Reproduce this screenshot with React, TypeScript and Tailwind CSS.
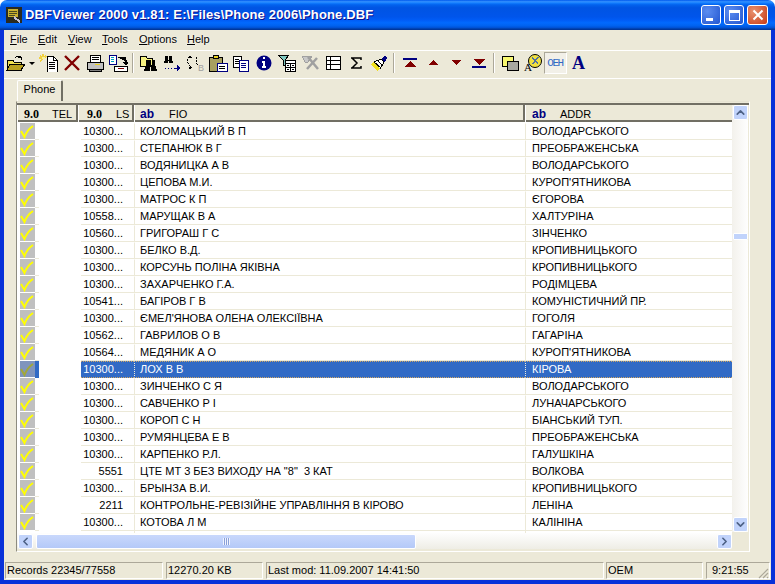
import React from 'react';
import { ChevronUp, ChevronDown, ChevronLeft, ChevronRight } from 'lucide-react';

type Row = { ls: string; fio: string; addr: string; selected?: boolean };

const rows: Row[] = [
  { ls: '10300...', fio: 'КОЛОМАЦЬКИЙ В П', addr: 'ВОЛОДАРСЬКОГО' },
  { ls: '10300...', fio: 'СТЕПАНЮК В Г', addr: 'ПРЕОБРАЖЕНСЬКА' },
  { ls: '10300...', fio: 'ВОДЯНИЦКА А В', addr: 'ВОЛОДАРСЬКОГО' },
  { ls: '10300...', fio: 'ЦЕПОВА М.И.', addr: "КУРОП'ЯТНИКОВА" },
  { ls: '10300...', fio: 'МАТРОС К П', addr: 'ЄГОРОВА' },
  { ls: '10558...', fio: 'МАРУЩАК В А', addr: 'ХАЛТУРІНА' },
  { ls: '10560...', fio: 'ГРИГОРАШ Г С', addr: 'ЗІНЧЕНКО' },
  { ls: '10300...', fio: 'БЕЛКО В.Д.', addr: 'КРОПИВНИЦЬКОГО' },
  { ls: '10300...', fio: 'КОРСУНЬ ПОЛІНА ЯКІВНА', addr: 'КРОПИВНИЦЬКОГО' },
  { ls: '10300...', fio: 'ЗАХАРЧЕНКО Г.А.', addr: 'РОДІМЦЕВА' },
  { ls: '10541...', fio: 'БАГІРОВ Г В', addr: 'КОМУНІСТИЧНИЙ ПР.' },
  { ls: '10300...', fio: "ЄМЕЛ'ЯНОВА ОЛЕНА ОЛЕКСІЇВНА", addr: 'ГОГОЛЯ' },
  { ls: '10562...', fio: 'ГАВРИЛОВ О В', addr: 'ГАГАРІНА' },
  { ls: '10564...', fio: 'МЕДЯНИК А О', addr: "КУРОП'ЯТНИКОВА" },
  { ls: '10300...', fio: 'ЛОХ В В', addr: 'КІРОВА', selected: true },
  { ls: '10300...', fio: 'ЗИНЧЕНКО С Я', addr: 'ВОЛОДАРСЬКОГО' },
  { ls: '10300...', fio: 'САВЧЕНКО Р І', addr: 'ЛУНАЧАРСЬКОГО' },
  { ls: '10300...', fio: 'КОРОП С Н', addr: 'БІАНСЬКИЙ ТУП.' },
  { ls: '10300...', fio: 'РУМЯНЦЕВА Е В', addr: 'ПРЕОБРАЖЕНСЬКА' },
  { ls: '10300...', fio: 'КАРПЕНКО Р.Л.', addr: 'ГАЛУШКІНА' },
  { ls: '5551', fio: 'ЦТЕ МТ 3 БЕЗ ВИХОДУ НА "8"  3 КАТ', addr: 'ВОЛКОВА' },
  { ls: '10300...', fio: 'БРЫНЗА В.И.', addr: 'КРОПИВНИЦЬКОГО' },
  { ls: '2211', fio: 'КОНТРОЛЬНЕ-РЕВІЗІЙНЕ УПРАВЛІННЯ В КІРОВО', addr: 'ЛЕНІНА' },
  { ls: '10300...', fio: 'КОТОВА Л М', addr: 'КАЛІНІНА' },
];

const menus = [
  { label: 'File', w: 'w-[28px]' },
  { label: 'Edit', w: 'w-[30px]' },
  { label: 'View', w: 'w-[34px]' },
  { label: 'Tools', w: 'w-[37px]' },
  { label: 'Options', w: 'w-[48px]' },
  { label: 'Help', w: 'w-[30px]' },
];

const Ico: React.FC<{ children: React.ReactNode; w?: number; h?: number }> = ({ children, w = 20, h = 18 }) => (
  <svg width={w} height={h} viewBox={`0 0 ${w} ${h}`} shapeRendering="crispEdges" fill="none">
    {children}
  </svg>
);

const OpenIcon = () => (
  <Ico>
    <path d="M1 6h6l1 2h7v8H1z" fill="#f0e050" stroke="#000" />
    <path d="M1 16l3-6h15l-4 6z" fill="#b8a020" stroke="#000" />
    <path d="M9 4q3-3 6-1M15 3v3M15 3h-3" stroke="#000" />
  </Ico>
);
const NewIcon = () => (
  <Ico>
    <path d="M8 2h6l4 4v12H8z" fill="#fff" stroke="#000" />
    <path d="M14 2v4h4M10 8h6M10 10h6M10 12h6M10 14h6" stroke="#000" />
    <path d="M1 2l3 2M4 0v3M1 7l3-2M7 2L5 4M0 4h3" stroke="#f0d040" strokeWidth="1.5" />
    <path d="M3 3h3v2H3z" fill="#f8f0a0" />
  </Ico>
);
const DeleteIcon = () => (
  <Ico>
    <path d="M3 2l14 14M17 2L3 16" stroke="#800000" strokeWidth="2.4" shapeRendering="auto" />
  </Ico>
);
const PrintIcon = () => (
  <Ico>
    <path d="M6 1h9l1 7H5z" fill="#fff" stroke="#000" />
    <path d="M2 8h16v7H2z" fill="#c0c0c0" stroke="#000" />
    <path d="M4 15h12v2H4z" fill="#808080" stroke="#000" />
    <path d="M10 10h5v1h-5z" fill="#e8d020" />
    <path d="M7 3h7M7 5h7" stroke="#000" />
  </Ico>
);
const ExportIcon = () => (
  <Ico>
    <path d="M1 1h7v9H1z" fill="#fff" stroke="#000080" />
    <path d="M3 3h3v1H3zM3 5h3v1H3zM3 7h3v1H3z" fill="#00a0c0" />
    <path d="M6 12h13v5H6z" fill="#fff" stroke="#000" />
    <path d="M10 14h6" stroke="#800000" />
    <path d="M10 3h5q3 0 3 3v2M15 8h6l-3 3z" stroke="#000" fill="#000" />
  </Ico>
);
const FindIcon = () => (
  <Ico>
    <path d="M1 2h6l1 2h5v8H1z" fill="#f4f080" stroke="#000" />
    <path d="M9 6h3v5h1V6h3v4l2 7h-6v-4h-1v4H5l2-7V6z" fill="#000" />
  </Ico>
);
const FindNextIcon = () => (
  <Ico>
    <path d="M3 2h3v4h1V2h3v3l1 4H7V7H6v2H2l1-4z" fill="#000" />
    <path d="M3 14h1M6 14h1M9 14h1M12 14h5" stroke="#000080" />
    <path d="M15 11l4 3-4 3z" fill="#000080" />
  </Ico>
);
const ReplaceIcon = () => (
  <Ico>
    <path d="M3 5q-1 5 3 8M12 3q-2 5 1 9" stroke="#000" strokeDasharray="2 1" />
    <path d="M5 1l2 3H3zM7 14l-3 1 1-3z" fill="#000" />
    <text x="13" y="17" fontSize="9" fontFamily="Liberation Sans, sans-serif" fill="#a0a0a0">B</text>
  </Ico>
);
const ClipIcon = () => (
  <Ico>
    <path d="M1 3h13v14H1z" fill="#a8a060" stroke="#000" />
    <path d="M5 1h5v3H5z" fill="#e8d020" stroke="#000" />
    <path d="M9 9h10v8H9z" fill="#fff" stroke="#000080" />
    <path d="M11 12h6M11 14h6" stroke="#000" />
  </Ico>
);
const CopyIcon = () => (
  <Ico>
    <path d="M2 2h8v11H2z" fill="#fff" stroke="#000" />
    <path d="M4 5h4M4 7h4M4 9h4" stroke="#000" />
    <path d="M8 6h9v11H8z" fill="#fff" stroke="#000080" />
    <path d="M10 9h5M10 11h5M10 13h5" stroke="#000080" />
  </Ico>
);
const InfoIcon = () => (
  <Ico>
    <circle cx="10" cy="9" r="7.5" fill="#000080" shapeRendering="auto" />
    <path d="M9 3h2v2H9zM8 7h3v5h1v2H8v-2h1V9H8z" fill="#fff" />
  </Ico>
);
const FilterIcon = () => (
  <Ico>
    <path d="M1 1h11L8 6v5L6 12V6z" fill="#80c8c0" stroke="#000" />
    <path d="M8 6h10v11H8z" fill="#fff" stroke="#000" />
    <path d="M8 9h10M13 9v8M8 13h10" stroke="#000" />
    <path d="M10 11h2M15 11h2M10 15h2M15 15h2" stroke="#000" />
  </Ico>
);
const FilterOffIcon = () => (
  <Ico>
    <path d="M2 2h10L8 8H5z" fill="#c8c8c8" stroke="#a0a0a0" />
    <path d="M8 3l10 12M17 4L7 15" stroke="#a0a0a0" strokeWidth="2.5" shapeRendering="auto" />
  </Ico>
);
const TableIcon = () => (
  <Ico>
    <path d="M3 2h14v13H3zM3 6h14M3 10h14M7 2v13" stroke="#000" fill="#fff" />
  </Ico>
);
const SigmaIcon = () => (
  <Ico>
    <path d="M5 4h10v2M6 4l5 5-5 5M5 14h10v-2" stroke="#000" strokeWidth="1.5" shapeRendering="auto" />
  </Ico>
);
const BrushIcon = () => (
  <Ico>
    <path d="M13 6l3-4 2 2-3 4z" fill="#000080" stroke="#000080" />
    <path d="M5 8l7-3 3 3-4 7z" fill="#fff" stroke="#000" />
    <path d="M7 9l4 4M9 7l4 4" stroke="#000" />
    <path d="M2 10l3-2 6 7-3 2z" fill="#f0e020" />
  </Ico>
);
const FirstIcon = () => (
  <Ico>
    <path d="M3 4h14v2H3z" fill="#000080" />
    <path d="M10 7l6 6H4z" fill="#800000" />
  </Ico>
);
const PrevIcon = () => (
  <Ico>
    <path d="M10 6l5 5H5z" fill="#800000" />
  </Ico>
);
const NextIcon = () => (
  <Ico>
    <path d="M5 6h10l-5 5z" fill="#800000" />
  </Ico>
);
const LastIcon = () => (
  <Ico>
    <path d="M4 5h12l-6 6z" fill="#800000" />
    <path d="M3 12h14v2H3z" fill="#000080" />
  </Ico>
);
const ColorsIcon = () => (
  <Ico>
    <path d="M2 2h11v10H2z" fill="#f8f870" stroke="#000" />
    <path d="M7 7h11v9H7z" fill="#a8a8a0" stroke="#000" />
  </Ico>
);
const FontColorIcon = () => (
  <Ico>
    <circle cx="12" cy="7" r="6.5" fill="#f0e040" stroke="#000" shapeRendering="auto" />
    <path d="M9 4l6 5M15 3l-5 7" stroke="#5070a0" strokeWidth="1.6" />
    <text x="1" y="17" fontSize="11" fontFamily="Liberation Serif, serif" fill="#000">A</text>
  </Ico>
);
const FontIcon = () => (
  <span className="text-[#000080] text-[18px] leading-[18px] font-bold font-['Liberation_Serif',serif]">A</span>
);

const Tool: React.FC<{ children: React.ReactNode; pressed?: boolean }> = ({ children, pressed }) => (
  <div
    className={`w-[23px] h-[22px] flex items-center justify-center shrink-0 ${
      pressed ? 'border border-t-[#aca899] border-l-[#aca899] border-r-white border-b-white bg-[#f2f0e8]' : ''
    }`}
  >
    {children}
  </div>
);

const Sep = () => (
  <div className="w-[8px] h-[20px] mt-[1px] flex justify-center shrink-0">
    <div className="w-[2px] h-full bg-[#aca899] border-r border-white" />
  </div>
);

const Check: React.FC<{ selected?: boolean }> = ({ selected }) => (
  <svg width="15" height="15" viewBox="0 0 15 15" fill="none">
    <path d="M1 7l3.5 6Q7 6 13 2" stroke={selected ? '#a3a838' : '#ffff00'} strokeWidth="2" />
  </svg>
);

const headerCell = 'h-full flex items-center border-r-2 border-[#716f64] border-l border-l-white';

const StatusPanel: React.FC<{ className: string; children?: React.ReactNode }> = ({ className, children }) => (
  <div className={`h-[17px] flex items-center border border-t-[#aca899] border-l-[#aca899] border-r-white border-b-white shrink-0 text-[11px] text-black ${className}`}>
    {children}
  </div>
);

const ScrollBtn: React.FC<{ children: React.ReactNode }> = ({ children }) => (
  <div className="w-[15px] h-[15px] shrink-0 rounded-[2px] border border-white bg-[#c1d3fb] flex items-center justify-center text-[#4d6185]">
    {children}
  </div>
);

export default function App() {
  return (
    <div className="w-[775px] h-[584px] flex flex-col overflow-hidden font-['Liberation_Sans',sans-serif] bg-white">
      {/* title bar */}
      <div className="h-[30px] shrink-0 rounded-t-[7px] flex items-center pl-[6px] pr-[7px] bg-[linear-gradient(180deg,#0058ee_0%,#3593ff_6%,#127dff_10%,#0262ee_16%,#0054e3_26%,#0055eb_56%,#005bf5_66%,#026afe_76%,#0062ef_86%,#0052d6_92%,#0040ab_96%,#003092_100%)]">
        <svg width="16" height="16" viewBox="0 0 16 16" shapeRendering="crispEdges" className="shrink-0">
          <rect width="16" height="16" fill="#2a2a20" />
          <rect x="2" y="2" width="10" height="8" fill="#c8b030" />
          <path d="M3 4h8M3 6h8M3 8h6" stroke="#4a4a20" />
          <path d="M8 10l6 5" stroke="#c0c0d8" strokeWidth="2" />
        </svg>
        <span className="ml-[3px] flex-1 text-white text-[13px] font-bold tracking-[0.15px] whitespace-pre [text-shadow:1px_1px_#0f1089]">
          DBFViewer 2000 v1.81: E:\Files\Phone 2006\Phone.DBF
        </span>
        <div className="flex gap-[3px]">
          <div className="w-[20px] h-[20px] rounded-[3px] border border-white bg-[radial-gradient(circle_at_30%_30%,#5c8df0,#2255d0)] flex items-end pb-[3px] pl-[4px]">
            <div className="w-[7px] h-[3px] bg-white" />
          </div>
          <div className="w-[20px] h-[20px] rounded-[3px] border border-white bg-[radial-gradient(circle_at_30%_30%,#5c8df0,#2255d0)] flex items-center justify-center">
            <div className="w-[11px] h-[11px] border border-white border-t-[3px]" />
          </div>
          <div className="w-[21px] h-[20px] rounded-[3px] border border-white bg-[radial-gradient(circle_at_30%_30%,#e8916f,#c73a15)] flex items-center justify-center">
            <svg width="12" height="12" viewBox="0 0 12 12">
              <path d="M1.5 1.5l9 9M10.5 1.5l-9 9" stroke="#fff" strokeWidth="2" />
            </svg>
          </div>
        </div>
      </div>

      <div className="flex-1 min-h-0 flex flex-col border-x-4 border-b-4 border-x-[#0831d9] border-b-[#0831d9] bg-[#ece9d8]">
        {/* menu */}
        <div className="h-[21px] shrink-0 flex items-center pl-[6px] pb-[1px] border-b border-white text-[11px] text-black [text-shadow:0_0_2px_#fff]">
          {menus.map((m) => (
            <span key={m.label} className={`${m.w} shrink-0`}>
              <span className="underline">{m.label[0]}</span>
              {m.label.slice(1)}
            </span>
          ))}
        </div>

        {/* toolbar */}
        <div className="h-[28px] shrink-0 flex items-start pt-[1px] border-b border-white">
          <Tool><OpenIcon /></Tool>
          <div className="w-[10px] h-[22px] flex items-center justify-center shrink-0">
            <div className="w-0 h-0 border-x-[3px] border-x-transparent border-t-[3px] border-t-black" />
          </div>
          <Tool><NewIcon /></Tool>
          <Tool><DeleteIcon /></Tool>
          <Tool><PrintIcon /></Tool>
          <Tool><ExportIcon /></Tool>
          <Sep />
          <Tool><FindIcon /></Tool>
          <Tool><FindNextIcon /></Tool>
          <Tool><ReplaceIcon /></Tool>
          <Tool><ClipIcon /></Tool>
          <Tool><CopyIcon /></Tool>
          <Tool><InfoIcon /></Tool>
          <Tool><FilterIcon /></Tool>
          <Tool><FilterOffIcon /></Tool>
          <Tool><TableIcon /></Tool>
          <Tool><SigmaIcon /></Tool>
          <Tool><BrushIcon /></Tool>
          <Sep />
          <Tool><FirstIcon /></Tool>
          <Tool><PrevIcon /></Tool>
          <Tool><NextIcon /></Tool>
          <Tool><LastIcon /></Tool>
          <Sep />
          <Tool><ColorsIcon /></Tool>
          <Tool><FontColorIcon /></Tool>
          <Tool pressed>
            <span className="text-[#316ac5] text-[11px] font-['Liberation_Mono',monospace] leading-none tracking-[-1.5px] pr-[1px]">OEH</span>
          </Tool>
          <Tool><FontIcon /></Tool>
        </div>

        {/* tabs + page */}
        <div className="flex-1 min-h-0 flex flex-col pl-[12px] pr-[21px]">
          <div className="h-[21px] mt-[1px] shrink-0 flex items-end">
            <div className="w-[46px] h-[21px] ml-[1px] pb-[3px] border-t border-l border-white border-r-2 border-r-[#716f64] rounded-t-[2px] flex items-center justify-center text-[11px] text-black">
              Phone
            </div>
          </div>

          <div className="h-[451px] shrink-0 border border-t-[#e6e3d2] border-l-[#8d8b7f] border-r-white border-b-white flex flex-col">
            <div className="h-[1px] shrink-0" />
            <div className="h-[2px] shrink-0 bg-[#716f64]" />
            <div className="flex items-start">
              <div className="w-[715px] h-[444px] shrink-0 flex flex-col">
                {/* header */}
                <div className="h-[17px] shrink-0 grid grid-cols-[61px_56px_391px_207px] text-[11px] text-black bg-[#ece9d8] border-b-2 border-[#716f64]">
                  <div className={`${headerCell} pl-[6px]`}>
                    <span className="font-bold text-[12px] font-['Liberation_Serif',serif] w-[28px]">9.0</span>TEL
                  </div>
                  <div className={`${headerCell} pl-[8px]`}>
                    <span className="font-bold text-[12px] font-['Liberation_Serif',serif] w-[29px]">9.0</span>LS
                  </div>
                  <div className={`${headerCell} pl-[5px]`}>
                    <span className="font-bold text-[#000080] text-[12px] w-[29px]">ab</span>FIO
                  </div>
                  <div className="h-full flex items-center border-l border-l-white pl-[6px]">
                    <span className="font-bold text-[#000080] text-[12px] w-[28px]">ab</span>ADDR
                  </div>
                </div>
                {/* rows */}
                <div className="flex-1 min-h-0 overflow-hidden bg-white text-[11px] leading-[13px] text-black pt-[1px]">
                  {rows.map((r, i) => {
                    const cell = r.selected
                      ? 'bg-[#316ac5] text-white border-y border-dotted border-y-[#cfa564]'
                      : 'border-y border-t-transparent border-b-[#ece9d8]';
                    return (
                      <div key={i} className="h-[17px] grid grid-cols-[61px_56px_391px_207px]">
                        <div className="flex items-stretch pl-[3px]">
                          <div className={`w-[15px] h-[16px] flex items-center justify-center ${r.selected ? 'bg-[#7f94bd]' : 'bg-[#c0c0c0]'}`}>
                            <Check selected={r.selected} />
                          </div>
                          <div className={`w-[4px] ${r.selected ? 'bg-[#316ac5]' : 'border-b border-[#ece9d8]'}`} />
                        </div>
                        <div className={`flex items-center justify-end pb-[1px] pr-[11px] ml-[3px] ${cell}`}>{r.ls}</div>
                        <div className={`flex items-center pb-[1px] pl-[5px] whitespace-pre border-l border-l-[#ece9d8] ${cell}`}>{r.fio}</div>
                        <div className={`flex items-center pb-[1px] pl-[6px] border-l border-l-[#ece9d8] ${cell}`}>{r.addr}</div>
                      </div>
                    );
                  })}
                  <div className="h-[17px] grid grid-cols-[61px_56px_391px_207px]">
                    <div />
                    <div />
                    <div className="border-l border-[#ece9d8]" />
                    <div className="border-l border-[#ece9d8]" />
                  </div>
                </div>
                {/* horizontal scrollbar */}
                <div className="h-[16px] shrink-0 flex items-center bg-[linear-gradient(180deg,#fefefe,#eeede5)] pl-[1px]">
                  <ScrollBtn><ChevronLeft size={13} strokeWidth={3} /></ScrollBtn>
                  <div className="w-[380px] h-[15px] ml-[3px] rounded-[2px] border border-white bg-[linear-gradient(180deg,#c9d8fc,#b4c9f8)] flex items-center justify-center">
                    <div className="w-[7px] h-[7px] bg-[repeating-linear-gradient(90deg,#f0f4ff_0,#f0f4ff_1px,#8aa0d8_1px,#8aa0d8_2px)]" />
                  </div>
                  <div className="flex-1" />
                  <ScrollBtn><ChevronRight size={13} strokeWidth={3} /></ScrollBtn>
                </div>
              </div>
              {/* vertical scrollbar */}
              <div className="w-[16px] h-[427px] shrink-0 flex flex-col items-end bg-[linear-gradient(90deg,#f3f1ec,#fefefe)]">
                <ScrollBtn><ChevronUp size={13} strokeWidth={3} /></ScrollBtn>
                <div className="h-[113px] shrink-0" />
                <div className="w-[15px] h-[7px] shrink-0 rounded-[1px] border border-white bg-[#c1d3fb]" />
                <div className="flex-1" />
                <ScrollBtn><ChevronDown size={13} strokeWidth={3} /></ScrollBtn>
              </div>
            </div>
          </div>
        </div>

        {/* status bar */}
        <div className="h-[23px] shrink-0 flex items-start pt-[5px] pl-[1px] pr-0">
          <StatusPanel className="w-[158px] pl-[1px]">Records 22345/77558</StatusPanel>
          <StatusPanel className="w-[97px] ml-[3px] pl-[1px]">12270.20 KB</StatusPanel>
          <StatusPanel className="w-[338px] ml-[3px] pl-[1px]">Last mod: 11.09.2007 14:41:50</StatusPanel>
          <StatusPanel className="w-[97px] ml-[2px] pl-[1px]">OEM</StatusPanel>
          <StatusPanel className="w-[64px] ml-[3px] pl-[5px] justify-between">
            9:21:55
            <svg width="12" height="12" viewBox="0 0 12 12" className="self-end mb-[-1px]">
              <path d="M11 2L2 11M11 6l-5 5M11 10l-1 1" stroke="#aca899" strokeWidth="1.2" />
            </svg>
          </StatusPanel>
        </div>
      </div>
    </div>
  );
}
